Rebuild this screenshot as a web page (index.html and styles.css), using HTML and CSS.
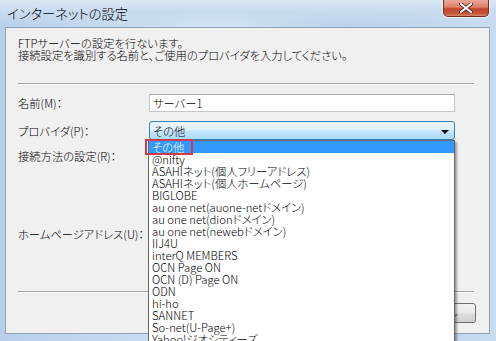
FILE: index.html
```html
<!DOCTYPE html>
<html lang="ja">
<head>
<meta charset="utf-8">
<link rel="stylesheet" href="styles.css">
</head>
<body>
<div class="window">
  <div class="titlebar">
    <span class="title">インターネットの設定</span>
    <div class="close">
      <svg width="14" height="10" viewBox="0 0 14 10">
        <path d="M2 1 L12 9 M12 1 L2 9" stroke="#4a2018" stroke-width="3.6" stroke-linecap="square" fill="none"/>
        <path d="M2 1 L12 9 M12 1 L2 9" stroke="#ffffff" stroke-width="2" stroke-linecap="square" fill="none"/>
      </svg>
    </div>
  </div>
  <div class="client">
    <p class="intro">FTPサーバーの設定を行ないます。<br>接続設定を識別する名前と、ご使用のプロバイダを入力してください。</p>
    <hr class="sep">
    <div class="form">
      <div class="row row-name">
        <span class="label">名前(M)：</span>
        <div class="input">サーバー1</div>
      </div>
      <div class="row row-prov">
        <span class="label">プロバイダ(P)：</span>
        <div class="combo-wrap">
          <div class="combo"><span>その他</span><span class="arrow"></span></div>
          <ul class="list">
            <li class="selected">その他</li>
            <li>@nifty</li>
            <li>ASAHIネット(個人フリーアドレス)</li>
            <li>ASAHIネット(個人ホームページ)</li>
            <li>BIGLOBE</li>
            <li>au one net(auone-netドメイン)</li>
            <li>au one net(dionドメイン)</li>
            <li>au one net(newebドメイン)</li>
            <li>IIJ4U</li>
            <li>interQ MEMBERS</li>
            <li>OCN Page ON</li>
            <li>OCN (D) Page ON</li>
            <li>ODN</li>
            <li>hi-ho</li>
            <li>SANNET</li>
            <li>So-net(U-Page+)</li>
            <li>Yahoo!ジオシティーズ</li>
          </ul>
          <div class="mark"></div>
        </div>
      </div>
      <div class="row row-conn">
        <span class="label">接続方法の設定(R)：</span>
      </div>
      <div class="row row-home">
        <span class="label">ホームページアドレス(U)：</span>
      </div>
    </div>
    <hr class="sep sep2">
    <div class="buttons">
      <button class="btn">OK</button>
      <button class="btn">キャンセル</button>
    </div>
  </div>
</div>
</body>
</html>
```

FILE: styles.css
```css
html, body {
  margin: 0;
  padding: 0;
}
body {
  font-family: "Noto Sans CJK JP", "Noto Sans", sans-serif;
  font-size: 11.3px;
  font-weight: 300;
  line-height: 12px;
  font-feature-settings: "palt";
  color: #000;
}
.window {
  width: 496px;
  height: 341px;
  overflow: hidden;
  display: flex;
  flex-direction: column;
  background: linear-gradient(to right, #b7cfe8 0%, #c3d8ee 20%, #d3e3f3 45%, #b9d1ea 70%, #c8dcf0 100%);
}
.titlebar {
  height: 27px;
  display: flex;
  align-items: flex-start;
  justify-content: space-between;
  padding: 0 7px 0 7px;
  background: linear-gradient(to bottom, #dbe8f5 0%, #c9dcef 40%, rgba(190,212,235,0) 100%);
}
.title {
  margin-top: 7px;
  font-size: 13.3px;
  line-height: 14px;
  color: #000;
}
.close {
  width: 44px;
  height: 16px;
  border: 1px solid #7a2b1f;
  border-top: none;
  border-radius: 0 0 5px 5px;
  background: linear-gradient(to bottom, #e9a899 0%, #dc7e68 45%, #c2452c 55%, #c8563b 85%, #d98a70 100%);
  box-shadow: 0 0 0 1px rgba(255,255,255,0.55);
  display: flex;
  align-items: center;
  justify-content: center;
}
.client {
  flex: 1;
  margin: 0 6px 7px 5px;
  border: 1px solid #8ea3ba;
  background: #f0f0f0;
  display: flex;
  flex-direction: column;
  position: relative;
}
.intro {
  margin: 9px 0 0 12px;
  white-space: nowrap;
}
.sep {
  margin: 22px 15px 0 12px;
  height: 0;
  border: none;
  border-top: 1px solid #a0a0a0;
  border-bottom: 1px solid #ffffff;
}
.form {
  display: flex;
  flex-direction: column;
  padding-left: 12px;
}
.row {
  display: flex;
  align-items: center;
}
.label {
  width: 131px;
  flex: none;
  white-space: nowrap;
}
.row-name {
  margin-top: 9px;
  height: 18px;
}
.input {
  width: 306px;
  height: 18px;
  box-sizing: border-box;
  background: #fff;
  border: 1px solid #c5c5c5;
  border-top-color: #abadb3;
  padding: 2px 3px 0 3px;
}
.row-prov {
  margin-top: 9px;
  height: 19px;
}
.combo-wrap {
  position: relative;
  width: 306px;
  height: 19px;
}
.combo {
  height: 19px;
  box-sizing: border-box;
  border: 1px solid #3c7fb1;
  border-radius: 3px;
  background: linear-gradient(to bottom, #eaf6fd 0%, #dbf0fc 45%, #c2e5fb 55%, #a9daf6 100%);
  display: flex;
  align-items: center;
  justify-content: space-between;
  padding: 1px 5px 0 3px;
}
.arrow {
  width: 0;
  height: 0;
  border-left: 4px solid transparent;
  border-right: 4px solid transparent;
  border-top: 4px solid #000;
  margin-top: 1px;
}
.list {
  position: absolute;
  left: -1px;
  top: 19px;
  width: 307px;
  box-sizing: border-box;
  margin: 0;
  padding: 0;
  list-style: none;
  background: #fff;
  border: 1px solid #646464;
  box-shadow: 2px 2px 2px rgba(0,0,0,0.35);
  z-index: 2;
}
.list li {
  height: 12px;
  line-height: 12px;
  padding-left: 3px;
  white-space: nowrap;
}
.list li.selected {
  background: #3399ff;
  color: #fff;
}
.mark {
  position: absolute;
  left: -4px;
  top: 18px;
  width: 48px;
  height: 16px;
  box-sizing: border-box;
  border: 2px solid #cf3a4c;
  z-index: 3;
}
.row-conn {
  margin-top: 10px;
  height: 12px;
}
.row-home {
  margin-top: 66px;
  height: 12px;
}
.sep2 {
  margin-top: 51px;
}
.buttons {
  display: flex;
  justify-content: flex-end;
  gap: 8px;
  margin: 10px 13px 0 0;
}
.btn {
  width: 88px;
  height: 20px;
  font: inherit;
  line-height: 12px;
  border: 1px solid #707070;
  border-radius: 3px;
  background: linear-gradient(to bottom, #f2f2f2 0%, #ebebeb 45%, #dddddd 55%, #cfcfcf 100%);
  padding: 0;
}
```
